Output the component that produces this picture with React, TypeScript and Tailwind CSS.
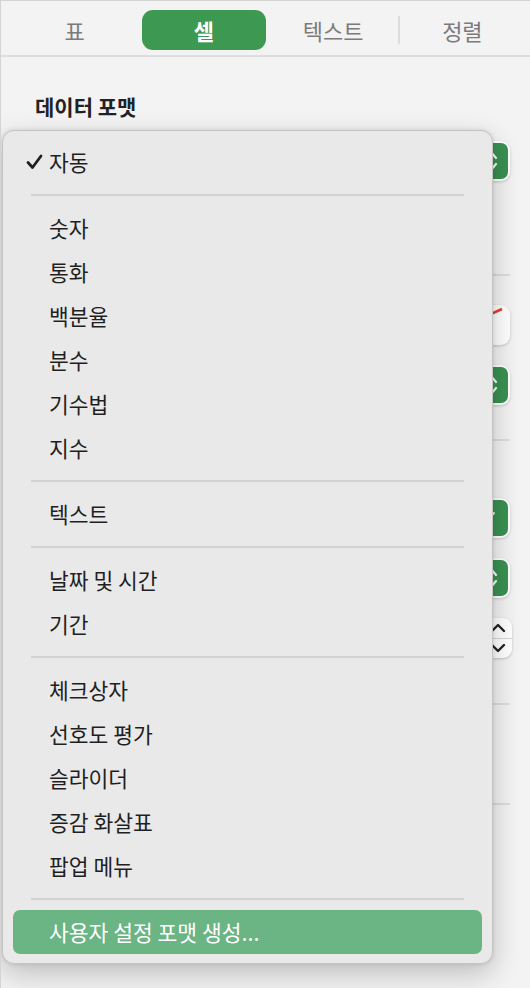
import React from "react";

const font = { fontFamily: '"Noto Sans CJK KR", "Noto Sans", sans-serif' };

const tabs = ["표", "셀", "텍스트", "정렬"];

type Entry = { label: string; checked?: boolean } | "sep";

const menu: Entry[] = [
  { label: "자동", checked: true },
  "sep",
  { label: "숫자" },
  { label: "통화" },
  { label: "백분율" },
  { label: "분수" },
  { label: "기수법" },
  { label: "지수" },
  "sep",
  { label: "텍스트" },
  "sep",
  { label: "날짜 및 시간" },
  { label: "기간" },
  "sep",
  { label: "체크상자" },
  { label: "선호도 평가" },
  { label: "슬라이더" },
  { label: "증감 화살표" },
  { label: "팝업 메뉴" },
  "sep",
];

const GreenPopup = () => (
  <div className="w-[200px] h-10 rounded-[9px] bg-white p-[2px] shadow-[0_1px_3px_rgba(0,0,0,0.18)]">
    <div className="h-full flex justify-end">
      <div className="w-[34px] h-full rounded-[7px] bg-[#3a9152] flex items-center justify-center">
        <svg width="14" height="24" viewBox="0 0 14 24" fill="none" stroke="white" strokeWidth="2.2" strokeLinecap="round" strokeLinejoin="round">
          <path d="M2 9 L7 3 L12 9" />
          <path d="M2 15 L7 21 L12 15" />
        </svg>
      </div>
    </div>
  </div>
);

const App = () => {
  return (
    <div
      className="relative w-[530px] h-[988px] overflow-hidden bg-[#f3f3f3] border-t border-l border-[#d4d4d4]"
      style={font}
    >
      {/* Tab bar */}
      <div className="h-[56px] border-b-2 border-[#dedede] pl-[9px] pr-[3px] pt-[9px] grid grid-cols-4">
        {tabs.map((t, i) => (
          <div key={t} className="relative flex justify-center">
            {i === 1 ? (
              <div className="w-[124px] h-10 rounded-[11px] bg-[#3d9951] text-white font-bold text-[22px] flex items-center justify-center">
                {t}
              </div>
            ) : (
              <div className="h-10 text-[#7b7b7b] text-[22px] flex items-center">{t}</div>
            )}
            {i === 2 && (
              <div className="absolute right-[-2px] top-[6px] w-[2px] h-[28px] bg-[#dcdcdc]" />
            )}
          </div>
        ))}
      </div>

      {/* Panel content behind the menu */}
      <div className="pr-[20px] pl-[34px]">
        <div className="pt-[36px] text-[21px] font-bold text-[#222] leading-[27px]">데이터 포맷</div>
        <div className="mt-[21px] flex justify-end">
          <GreenPopup />
        </div>
        <div className="mt-[93px] h-[2px] bg-[#dddddd]" />
        <div className="mt-[29px] flex justify-end">
          <div className="relative w-[200px] h-10 rounded-[9px] bg-white shadow-[0_1px_3px_rgba(0,0,0,0.2)] overflow-hidden">
            <svg className="absolute right-[2px] top-[2px]" width="24" height="12" viewBox="0 0 24 12">
              <path d="M0 10 L18 2" stroke="#e5402f" strokeWidth="2.5" />
            </svg>
          </div>
        </div>
        <div className="mt-[20px] flex justify-end">
          <GreenPopup />
        </div>
        <div className="mt-[34px] h-[2px] bg-[#dddddd]" />
        <div className="mt-[57px] flex justify-end">
          <div className="w-[44px] h-10 rounded-[9px] bg-white p-[2px] shadow-[0_1px_3px_rgba(0,0,0,0.18)]">
            <div className="h-full rounded-[7px] bg-[#3a9152] flex items-center justify-center">
              <svg width="22" height="22" viewBox="0 0 22 22" fill="none" stroke="white" strokeWidth="2" strokeLinecap="round" strokeLinejoin="round">
                <path d="M5 12 L9 16 L17 6" />
              </svg>
            </div>
          </div>
        </div>
        <div className="mt-[20px] flex justify-end">
          <GreenPopup />
        </div>
        <div className="mt-[20px] flex justify-end">
          <div className="w-[28px] h-10 mr-[-2px] rounded-[9px] bg-white shadow-[0_1px_3px_rgba(0,0,0,0.2)] flex flex-col">
            <div className="flex-1 flex items-center justify-center border-b border-[#d8d8d8]">
              <svg width="16" height="10" viewBox="0 0 16 10" fill="none" stroke="#222" strokeWidth="2.4" strokeLinecap="round" strokeLinejoin="round">
                <path d="M2 8 L8 2 L14 8" />
              </svg>
            </div>
            <div className="flex-1 flex items-center justify-center">
              <svg width="16" height="10" viewBox="0 0 16 10" fill="none" stroke="#222" strokeWidth="2.4" strokeLinecap="round" strokeLinejoin="round">
                <path d="M2 2 L8 8 L14 2" />
              </svg>
            </div>
          </div>
        </div>
        <div className="mt-[45px] h-[2px] bg-[#dddddd]" />
        <div className="mt-[98px] h-[2px] bg-[#dddddd]" />
      </div>

      {/* Popup menu */}
      <div className="absolute left-[1px] top-[129px] w-[491px] rounded-[12px] bg-[#e9e9e9] border border-[#c4c4c4] shadow-[0_10px_28px_rgba(0,0,0,0.22),0_0_4px_rgba(0,0,0,0.12)] py-[9px] px-[10px]">
        {menu.map((m, i) =>
          m === "sep" ? (
            <div key={i} className="h-[22px] flex items-center px-[18px]">
              <div className="h-[2px] w-full bg-[#d2d2d2]" />
            </div>
          ) : (
            <div key={i} className="relative h-[44px] flex items-center pl-[36px] text-[21.5px] text-[#1f1f1f]">
              {m.checked && (
                <svg className="absolute left-[13px] top-[14px]" width="17" height="16" viewBox="0 0 17 16" fill="none" stroke="#1f1f1f" strokeWidth="2.8" strokeLinecap="round" strokeLinejoin="round">
                  <path d="M2 8.5 L6.5 13.5 L15 2" />
                </svg>
              )}
              {m.label}
            </div>
          )
        )}
        <div className="h-[44px] rounded-[7px] bg-[#6bb483] flex items-center pl-[36px] text-[21.5px] text-white">
          사용자 설정 포맷 생성...
        </div>
      </div>
    </div>
  );
};

export default App;
